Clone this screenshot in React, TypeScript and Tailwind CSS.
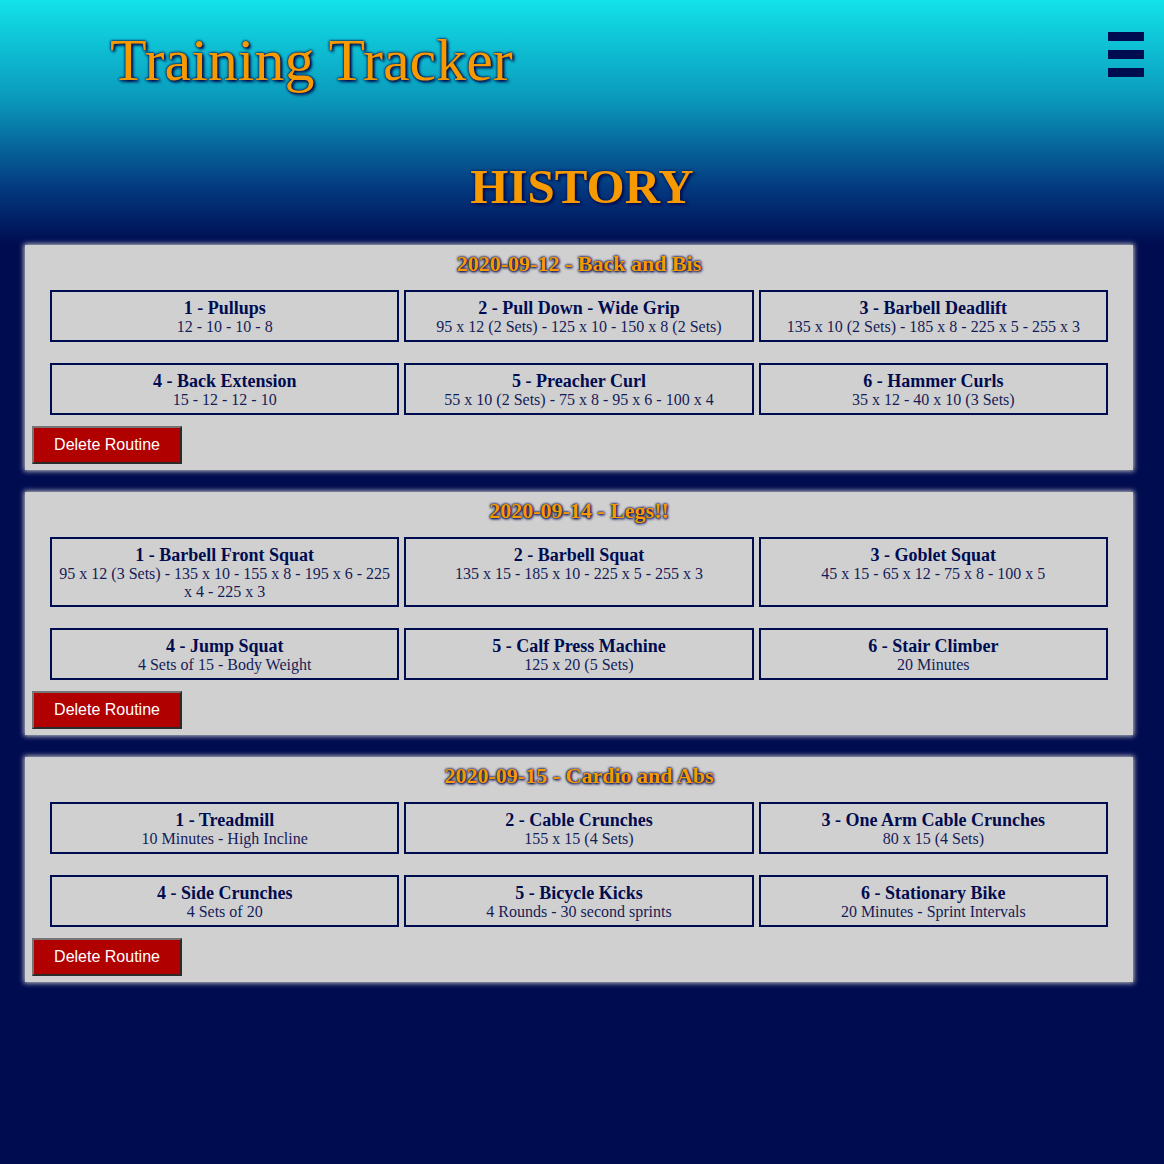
import React from "react";

type Exercise = { name: string; detail: string };
type Routine = { title: string; exercises: Exercise[] };

const routines: Routine[] = [
  {
    title: "2020-09-12 - Back and Bis",
    exercises: [
      { name: "1 - Pullups", detail: "12 - 10 - 10 - 8" },
      { name: "2 - Pull Down - Wide Grip", detail: "95 x 12 (2 Sets) - 125 x 10 - 150 x 8 (2 Sets)" },
      { name: "3 - Barbell Deadlift", detail: "135 x 10 (2 Sets) - 185 x 8 - 225 x 5 - 255 x 3" },
      { name: "4 - Back Extension", detail: "15 - 12 - 12 - 10" },
      { name: "5 - Preacher Curl", detail: "55 x 10 (2 Sets) - 75 x 8 - 95 x 6 - 100 x 4" },
      { name: "6 - Hammer Curls", detail: "35 x 12 - 40 x 10 (3 Sets)" },
    ],
  },
  {
    title: "2020-09-14 - Legs!!",
    exercises: [
      { name: "1 - Barbell Front Squat", detail: "95 x 12 (3 Sets) - 135 x 10 - 155 x 8 - 195 x 6 - 225 x 4 - 225 x 3" },
      { name: "2 - Barbell Squat", detail: "135 x 15 - 185 x 10 - 225 x 5 - 255 x 3" },
      { name: "3 - Goblet Squat", detail: "45 x 15 - 65 x 12 - 75 x 8 - 100 x 5" },
      { name: "4 - Jump Squat", detail: "4 Sets of 15 - Body Weight" },
      { name: "5 - Calf Press Machine", detail: "125 x 20 (5 Sets)" },
      { name: "6 - Stair Climber", detail: "20 Minutes" },
    ],
  },
  {
    title: "2020-09-15 - Cardio and Abs",
    exercises: [
      { name: "1 - Treadmill", detail: "10 Minutes - High Incline" },
      { name: "2 - Cable Crunches", detail: "155 x 15 (4 Sets)" },
      { name: "3 - One Arm Cable Crunches", detail: "80 x 15 (4 Sets)" },
      { name: "4 - Side Crunches", detail: "4 Sets of 20" },
      { name: "5 - Bicycle Kicks", detail: "4 Rounds - 30 second sprints" },
      { name: "6 - Stationary Bike", detail: "20 Minutes - Sprint Intervals" },
    ],
  },
];

function RoutineCard({ routine }: { routine: Routine }) {
  return (
    <div className="ml-[25px] mr-[31px] bg-[#d0d0d0] pt-[6px] pb-[6px] shadow-[0_0_5px_1px_#c8c8c8]">
      <h2 className="text-center text-[22px] font-bold leading-[26px] text-[#f79a00] [text-shadow:1px_1px_3px_#000c50,0_0_3px_#000c50,0_0_2px_#000c50]">
        {routine.title}
      </h2>
      <div className="mx-[25px] mt-[13px] grid grid-cols-3 gap-x-[5px] gap-y-[21px]">
        {routine.exercises.map((ex) => (
          <div key={ex.name} className="border-2 border-[#000c50] px-[5px] pt-[6px] pb-[4px] text-center text-[#000c50]">
            <div className="text-[18px] font-bold leading-[20px]">{ex.name}</div>
            <div className="text-[16px] leading-[18px] text-[#141c58]">{ex.detail}</div>
          </div>
        ))}
      </div>
      <button className="ml-[7px] mt-[11px] h-[38px] w-[150px] border-2 border-t-[#767676] border-l-[#767676] border-r-[#2a2a2a] border-b-[#2a2a2a] bg-[#b00000] font-['Liberation_Sans',Arial,sans-serif] text-[16px] text-white">
        Delete Routine
      </button>
    </div>
  );
}

export default function App() {
  return (
    <div className="min-h-screen bg-[#000c50] bg-[linear-gradient(to_bottom,#12e2e9_0px,#0a98bb_100px,#03377e_190px,#000c50_245px)] bg-no-repeat pb-10 font-['Liberation_Serif','Times_New_Roman',serif]">
      <div className="flex items-start justify-between pl-[110px] pr-[20px] pt-[30px]">
        <h1 className="text-[60px] leading-[60px] text-[#f79a00] [text-shadow:2px_2px_3px_#001050,0_0_3px_#001050,0_0_2px_#001050]">
          Training Tracker
        </h1>
        <div className="mt-[2px] flex flex-col gap-[9px]">
          <span className="block h-[9px] w-[36px] bg-[#000c50]" />
          <span className="block h-[9px] w-[36px] bg-[#000c50]" />
          <span className="block h-[9px] w-[36px] bg-[#000c50]" />
        </div>
      </div>
      <h2 className="mt-[73px] text-center text-[49px] font-bold leading-[48px] text-[#f79a00] [text-shadow:2px_2px_3px_#000c50,0_0_3px_#000c50]">
        HISTORY
      </h2>
      <div className="mt-[34px] flex flex-col gap-[22px]">
        {routines.map((r) => (
          <RoutineCard key={r.title} routine={r} />
        ))}
      </div>
    </div>
  );
}
